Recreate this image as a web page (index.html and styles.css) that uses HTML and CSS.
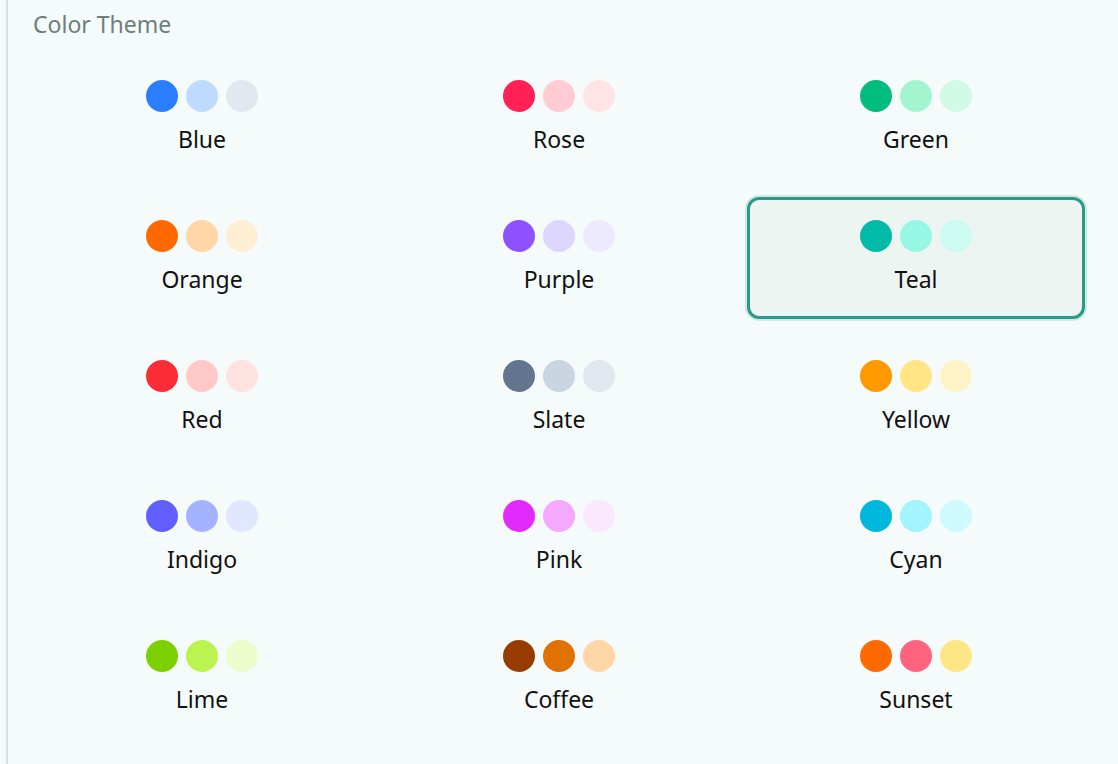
FILE: index.html
```html
<html lang="en"><head><meta http-equiv="Content-Type" content="text/html; charset=UTF-8">
  <meta name="viewport" content="width=device-width,minimum-scale=1.0,maximum-scale=1.0,user-scalable=no" />
  <link rel="stylesheet" href="styles.css">
</head>
<body>
<div class="panel">
  <div class="panel-title">Color Theme</div>

  <div class="theme-grid">
    <div class="theme">
      <div class="dots"><span class="dot" style="background:#2b7fff"></span><span class="dot" style="background:#bedbff"></span><span class="dot" style="background:#e2e8f0"></span></div>
      <div class="theme-name">Blue</div>
    </div>
    <div class="theme">
      <div class="dots"><span class="dot" style="background:#ff2056"></span><span class="dot" style="background:#ffccd3"></span><span class="dot" style="background:#ffe4e6"></span></div>
      <div class="theme-name">Rose</div>
    </div>
    <div class="theme">
      <div class="dots"><span class="dot" style="background:#00bc7d"></span><span class="dot" style="background:#a4f4cf"></span><span class="dot" style="background:#d0fae5"></span></div>
      <div class="theme-name">Green</div>
    </div>

    <div class="theme">
      <div class="dots"><span class="dot" style="background:#ff6900"></span><span class="dot" style="background:#ffd6a7"></span><span class="dot" style="background:#ffedd4"></span></div>
      <div class="theme-name">Orange</div>
    </div>
    <div class="theme">
      <div class="dots"><span class="dot" style="background:#8e51ff"></span><span class="dot" style="background:#ddd6ff"></span><span class="dot" style="background:#ede9fe"></span></div>
      <div class="theme-name">Purple</div>
    </div>
    <div class="theme selected">
      <div class="dots"><span class="dot" style="background:#00bba7"></span><span class="dot" style="background:#96f7e4"></span><span class="dot" style="background:#cbfbf1"></span></div>
      <div class="theme-name">Teal</div>
    </div>

    <div class="theme">
      <div class="dots"><span class="dot" style="background:#fb2c36"></span><span class="dot" style="background:#ffc9c9"></span><span class="dot" style="background:#ffe2e2"></span></div>
      <div class="theme-name">Red</div>
    </div>
    <div class="theme">
      <div class="dots"><span class="dot" style="background:#62748e"></span><span class="dot" style="background:#cad5e2"></span><span class="dot" style="background:#e2e8f0"></span></div>
      <div class="theme-name">Slate</div>
    </div>
    <div class="theme">
      <div class="dots"><span class="dot" style="background:#fe9a00"></span><span class="dot" style="background:#fee685"></span><span class="dot" style="background:#fef3c6"></span></div>
      <div class="theme-name">Yellow</div>
    </div>

    <div class="theme">
      <div class="dots"><span class="dot" style="background:#615fff"></span><span class="dot" style="background:#a3b3ff"></span><span class="dot" style="background:#e0e7ff"></span></div>
      <div class="theme-name">Indigo</div>
    </div>
    <div class="theme">
      <div class="dots"><span class="dot" style="background:#e12afb"></span><span class="dot" style="background:#f4a8ff"></span><span class="dot" style="background:#fae8ff"></span></div>
      <div class="theme-name">Pink</div>
    </div>
    <div class="theme">
      <div class="dots"><span class="dot" style="background:#00b8db"></span><span class="dot" style="background:#a2f4fd"></span><span class="dot" style="background:#cefafe"></span></div>
      <div class="theme-name">Cyan</div>
    </div>

    <div class="theme">
      <div class="dots"><span class="dot" style="background:#7ccf00"></span><span class="dot" style="background:#bbf451"></span><span class="dot" style="background:#ecfcca"></span></div>
      <div class="theme-name">Lime</div>
    </div>
    <div class="theme">
      <div class="dots"><span class="dot" style="background:#973c00"></span><span class="dot" style="background:#e17100"></span><span class="dot" style="background:#ffd6a7"></span></div>
      <div class="theme-name">Coffee</div>
    </div>
    <div class="theme">
      <div class="dots"><span class="dot" style="background:#ff6900"></span><span class="dot" style="background:#ff637e"></span><span class="dot" style="background:#fee685"></span></div>
      <div class="theme-name">Sunset</div>
    </div>
  </div>
</div>
</body>
</html>
```

FILE: styles.css
```css
html, body {
  margin: 0;
  padding: 0;
  background: #f5fafa;
}

body {
  font-family: "Noto Sans", "Open Sans", sans-serif;
  color: #111;
}

.panel {
  margin-left: 6px;
  min-height: 764px;
  box-sizing: border-box;
  border-left: 2px solid #d3e4e3;
  padding: 10px 33px 0 25px;
}

.panel-title {
  font-size: 23px;
  line-height: 28px;
  color: #6e7e7b;
  margin-bottom: 19px;
}

.theme-grid {
  display: grid;
  grid-template-columns: repeat(3, 1fr);
  column-gap: 19px;
  row-gap: 18px;
}

.theme {
  display: flex;
  flex-direction: column;
  align-items: center;
  gap: 13px;
  padding: 20px 0 23px;
  border: 3px solid transparent;
  border-radius: 12px;
}

.theme.selected {
  border-color: #2c9a8b;
  background: #edf5f3;
  box-shadow: 0 0 0 2px rgba(44, 154, 139, 0.18);
}

.dots {
  display: flex;
  gap: 8px;
}

.dot {
  width: 32px;
  height: 32px;
  border-radius: 50%;
}

.theme-name {
  font-size: 23px;
  line-height: 28px;
}
```
